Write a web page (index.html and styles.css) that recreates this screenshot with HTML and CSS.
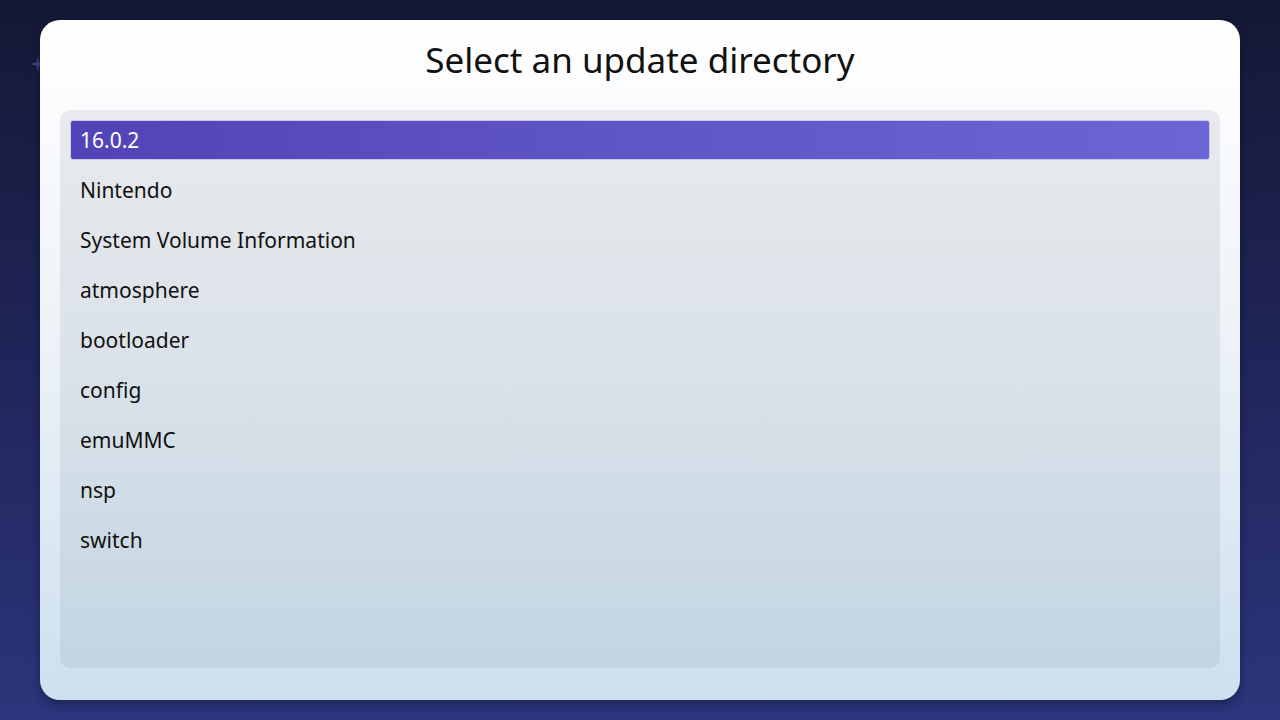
FILE: index.html
```html
<!DOCTYPE html>
<html lang="en">
<head>
  <meta charset="UTF-8">
  <title>Select an update directory</title>
  <link rel="stylesheet" href="styles.css">
</head>
<body>
<!-- background sparkle peeking out from behind the dialog -->
<svg class="sparkle" width="16" height="16" viewBox="0 0 16 16">
  <path d="M8 0 L9.5 6.5 L16 8 L9.5 9.5 L8 16 L6.5 9.5 L0 8 L6.5 6.5 Z" fill="#3c4380"/>
</svg>

<div class="dialog">
  <h1 class="title">Select an update directory</h1>

  <!-- directory list -->
  <ul class="dir-list">
    <li class="dir-item selected">16.0.2</li>
    <li class="dir-item">Nintendo</li>
    <li class="dir-item">System Volume Information</li>
    <li class="dir-item">atmosphere</li>
    <li class="dir-item">bootloader</li>
    <li class="dir-item">config</li>
    <li class="dir-item">emuMMC</li>
    <li class="dir-item">nsp</li>
    <li class="dir-item">switch</li>
  </ul>
</div>
</body>
</html>
```

FILE: styles.css
```css
html, body {
  height: 100%;
}
body {
  margin: 0;
  padding: 20px 40px;
  box-sizing: border-box;
  font-family: "Noto Sans", "Open Sans", sans-serif;
  background: linear-gradient(180deg, #151834 0%, #1f2456 45%, #2d357c 100%);
  position: relative;
  overflow: hidden;
}
.sparkle {
  position: absolute;
  left: 30px;
  top: 56px;
}
.dialog {
  position: relative;
  height: 680px;
  border-radius: 20px;
  background: linear-gradient(180deg, #ffffff 0%, #eef3f8 45%, #cde0ef 100%);
  box-shadow: 0 4px 10px rgba(10, 14, 40, 0.45);
  padding: 20px 20px 32px;
  box-sizing: border-box;
  display: flex;
  flex-direction: column;
}
.title {
  margin: 0;
  height: 70px;
  line-height: 40px;
  font-size: 35px;
  font-weight: 400;
  text-align: center;
  color: #111;
}
.dir-list {
  list-style: none;
  margin: 0;
  padding: 10px;
  flex: 1;
  border-radius: 10px;
  background: linear-gradient(180deg, #e8eaed 0%, #d9e1e9 50%, #c2d5e2 100%);
  display: flex;
  flex-direction: column;
  gap: 10px;
}
.dir-item {
  box-sizing: border-box;
  height: 40px;
  line-height: 38px;
  padding: 0 9px;
  font-size: 21px;
  color: #111;
  border: 1px solid transparent;
  border-radius: 3px;
}
.dir-item.selected {
  color: #fff;
  background: linear-gradient(90deg, #5243b7 0%, #5d52c4 40%, #6b66d3 100%);
  border-color: #c8c6ea;
}
```
